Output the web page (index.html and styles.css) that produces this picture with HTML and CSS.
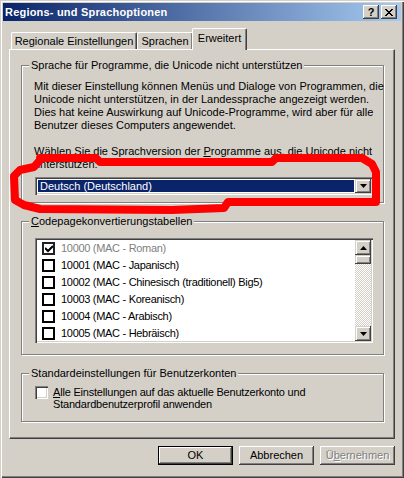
FILE: index.html
```html
<!DOCTYPE html>
<html lang="de">
<head>
<meta charset="utf-8">
<title>Regions- und Sprachoptionen</title>
<link rel="stylesheet" href="styles.css">
</head>
<body>
<div class="window">
  <div class="titlebar">
    <span class="title">Regions- und Sprachoptionen</span>
    <div class="tbtns">
      <span class="tbtn help">?</span>
      <span class="tbtn">
        <svg width="8" height="7" viewBox="0 0 8 7"><path d="M0 0h2v1h1v1h2v-1h1v-1h2v1h-1v1h-1v1h-1v1h1v1h1v1h1v1h-2v-1h-1v-1h-2v1h-1v1h-2v-1h1v-1h1v-1h1v-1h-1v-1h-1v-1h-1z" fill="#000"/></svg>
      </span>
    </div>
  </div>

  <div class="main">
    <div class="tabs">
      <div class="tab t1">Regionale Einstellungen</div>
      <div class="tab t2">Sprachen</div>
      <div class="tab t3 active">Erweitert</div>
    </div>

    <div class="panel">
      <div class="group g1">
        <span class="group-label">Sprache für Programme, die Unicode nicht unterstützen</span>
        <p class="txt">Mit dieser Einstellung können Menüs und Dialoge von Programmen, die<br>Unicode nicht unterstützen, in der Landessprache angezeigt werden.<br>Dies hat keine Auswirkung auf Unicode-Programme, wird aber für alle<br>Benutzer dieses Computers angewendet.</p>
        <p class="txt gap">Wählen Sie die Sprachversion der <u>P</u>rogramme aus, die Unicode nicht<br>unterstützen:</p>
        <div class="combo">
          <div class="combo-val"><span class="sel">Deutsch (Deutschland)</span></div>
          <div class="combo-btn">
            <svg width="7" height="4" viewBox="0 0 7 4"><path d="M0 0h7l-3.5 4z" fill="#000"/></svg>
          </div>
        </div>
      </div>

      <div class="group g2">
        <span class="group-label"><u>C</u>odepagekonvertierungstabellen</span>
        <div class="listbox">
          <div class="items">
            <div class="row disabled"><span class="cb checked"><svg width="8" height="8" viewBox="0 0 8 8"><path d="M0 3l3 3 5-5" stroke="#000" stroke-width="2" fill="none"/></svg></span>10000 (MAC - Roman)</div>
            <div class="row"><span class="cb"></span>10001 (MAC - Japanisch)</div>
            <div class="row"><span class="cb"></span>10002 (MAC - Chinesisch (traditionell) Big5)</div>
            <div class="row"><span class="cb"></span>10003 (MAC - Koreanisch)</div>
            <div class="row"><span class="cb"></span>10004 (MAC - Arabisch)</div>
            <div class="row"><span class="cb"></span>10005 (MAC - Hebräisch)</div>
          </div>
          <div class="scrollbar">
            <div class="sb-btn"><svg width="7" height="4" viewBox="0 0 7 4"><path d="M3.5 0L7 4H0z" fill="#000"/></svg></div>
            <div class="sb-thumb"></div>
            <div class="sb-track"></div>
            <div class="sb-btn"><svg width="7" height="4" viewBox="0 0 7 4"><path d="M0 0h7l-3.5 4z" fill="#000"/></svg></div>
          </div>
        </div>
      </div>

      <div class="group g3">
        <span class="group-label">Standardeinstellungen für Benutzerkonten</span>
        <div class="check-line">
          <span class="cb3d"></span>
          <span class="check-text"><u>A</u>lle Einstellungen auf das aktuelle Benutzerkonto und<br>Standardbenutzerprofil anwenden</span>
        </div>
      </div>
    </div>

    <div class="buttons">
      <div class="btn default"><span>OK</span></div>
      <div class="btn"><span>Abbrechen</span></div>
      <div class="btn disabled"><span>Ü<u>b</u>ernehmen</span></div>
    </div>
  </div>

  <svg class="marker" width="404" height="478" viewBox="0 0 404 478">
    <path d="M40 158 L96 158 L100 162 L272 162 L276 158 L362 158 L372 164 L376 172 L376 202 L228 202 L224 208 L172 210 L40 209 L24 205 L15 200 L14 176 L20 170 L34 167 L40 160" fill="none" stroke="#ff0000" stroke-width="8" stroke-linejoin="round" stroke-linecap="round"/>
  </svg>
</div>
</body>
</html>
```
FILE: styles.css
```css
* { box-sizing: border-box; }
html, body { margin: 0; padding: 0; }
body {
  width: 404px;
  height: 478px;
  overflow: hidden;
  background: #d4d0c8;
  font-family: "Liberation Sans", Arial, sans-serif;
  font-size: 11px;
  line-height: 13px;
  color: #000;
}
.window {
  position: relative;
  width: 404px;
  height: 478px;
  padding: 3px;
  background: #d4d0c8;
  box-shadow: inset 1px 1px 0 #d4d0c8, inset 2px 2px 0 #fff, inset -1px -1px 0 #404040, inset -2px -2px 0 #808080;
}
.titlebar {
  height: 18px;
  display: flex;
  align-items: center;
  justify-content: space-between;
  padding: 0 4px 0 2px;
  background: linear-gradient(to right, #0a246a, #a6caf0);
}
.title { color: #fff; font-weight: bold; font-size: 11px; letter-spacing: 0.2px; }
.tbtns { display: flex; gap: 2px; }
.tbtn {
  width: 16px; height: 14px;
  display: flex; align-items: center; justify-content: center;
  background: #d4d0c8;
  box-shadow: inset -1px -1px 0 #404040, inset 1px 1px 0 #fff, inset -2px -2px 0 #808080;
}
.tbtn.help { font-weight: bold; font-size: 11px; line-height: 12px; }

.main { padding: 7px 6px 0 6px; }
.tabs { display: flex; align-items: flex-end; height: 21px; padding-left: 2px; }
.tab {
  height: 17px;
  display: flex; align-items: center; justify-content: center;
  border-top: 1px solid #fff;
  border-left: 1px solid #fff;
  border-right: 1px solid #404040;
  border-radius: 2px 2px 0 0;
  box-shadow: inset -1px 0 0 #808080;
  padding-top: 1px;
}
.t1 { width: 126px; }
.t2 { width: 56px; }
.t3 { width: 55px; }
.tab.active {
  height: 22px;
  margin: 0 -2px -1px -1px;
  position: relative;
  z-index: 1;
  background: #d4d0c8;
  padding-bottom: 4px;
}
.panel {
  height: 390px;
  border-top: 1px solid #fff;
  border-left: 1px solid #fff;
  border-right: 1px solid #404040;
  border-bottom: 1px solid #404040;
  box-shadow: inset -1px -1px 0 #808080;
  padding: 0 10px 0 11px;
}
.group {
  position: relative;
  border: 1px solid #808080;
  box-shadow: 1px 1px 0 #fff, inset 1px 1px 0 #fff;
}
.group-label {
  position: absolute;
  top: -7px;
  left: 7px;
  padding: 0 2px;
  background: #d4d0c8;
  white-space: nowrap;
}
.g1 { margin-top: 15px; padding: 14px 10px 7px 12px; }
.g2 { margin-top: 18px; padding: 16px 10px 11px 13px; }
.g3 { margin-top: 18px; padding: 12px 10px 11px 13px; }
.txt { margin: 0; white-space: nowrap; }
.txt.gap { margin-top: 13px; }

.combo {
  margin: 6px 0 0 1px;
  height: 18px;
  display: flex;
  background: #fff;
  padding: 2px;
  box-shadow: inset 1px 1px 0 #808080, inset 2px 2px 0 #404040, inset -1px -1px 0 #fff, inset -2px -2px 0 #d4d0c8;
}
.combo-val { flex: 1; padding: 1px; display: flex; }
.sel { flex: 1; background: #0a246a; color: #fff; padding-left: 2px; line-height: 12px; }
.combo-btn, .sb-btn {
  width: 16px;
  display: flex; align-items: center; justify-content: center;
  background: #d4d0c8;
  box-shadow: inset -1px -1px 0 #404040, inset 1px 1px 0 #d4d0c8, inset 2px 2px 0 #fff, inset -2px -2px 0 #808080;
}

.listbox {
  height: 105px;
  display: flex;
  background: #fff;
  padding: 2px;
  box-shadow: inset 1px 1px 0 #808080, inset 2px 2px 0 #404040, inset -1px -1px 0 #fff, inset -2px -2px 0 #d4d0c8;
}
.items { flex: 1; overflow: hidden; }
.row { height: 17px; display: flex; align-items: center; white-space: nowrap; padding-left: 5px; letter-spacing: -0.3px; }
.row.disabled { color: #808080; }
.cb {
  width: 13px; height: 13px;
  border: 2px solid #000;
  background: #fff;
  margin-right: 6px;
  display: flex; align-items: center; justify-content: center;
}
.cb.checked { border-color: #202020; }
.scrollbar { width: 16px; display: flex; flex-direction: column; }
.sb-btn { height: 15px; }
.sb-thumb {
  height: 9px;
  background: #d4d0c8;
  box-shadow: inset -1px -1px 0 #404040, inset 1px 1px 0 #d4d0c8, inset 2px 2px 0 #fff, inset -2px -2px 0 #808080;
}
.sb-track {
  flex: 1;
  background-color: #d4d0c8;
  background-image: repeating-conic-gradient(#fff 0 25%, #d4d0c8 0 50%);
  background-size: 2px 2px;
}

.check-line { display: flex; align-items: flex-start; }
.cb3d {
  width: 13px; height: 13px;
  margin-right: 5px;
  background: #fff;
  box-shadow: inset 1px 1px 0 #808080, inset 2px 2px 0 #404040, inset -1px -1px 0 #fff, inset -2px -2px 0 #d4d0c8;
}
.check-text { white-space: nowrap; line-height: 12px; letter-spacing: -0.2px; }

.buttons { display: flex; justify-content: flex-end; gap: 6px; margin-top: 7px; }
.btn {
  width: 75px; height: 19px;
  display: flex; align-items: center; justify-content: center;
  background: #d4d0c8;
  box-shadow: inset -1px -1px 0 #404040, inset 1px 1px 0 #fff, inset -2px -2px 0 #808080;
}
.btn.default {
  box-shadow: inset 0 0 0 1px #000, inset -2px -2px 0 #404040, inset 2px 2px 0 #fff, inset -3px -3px 0 #808080;
}
.btn.disabled { color: #808080; text-shadow: 1px 1px 0 #fff; }
.marker { position: absolute; left: 0; top: 0; pointer-events: none; }
```
